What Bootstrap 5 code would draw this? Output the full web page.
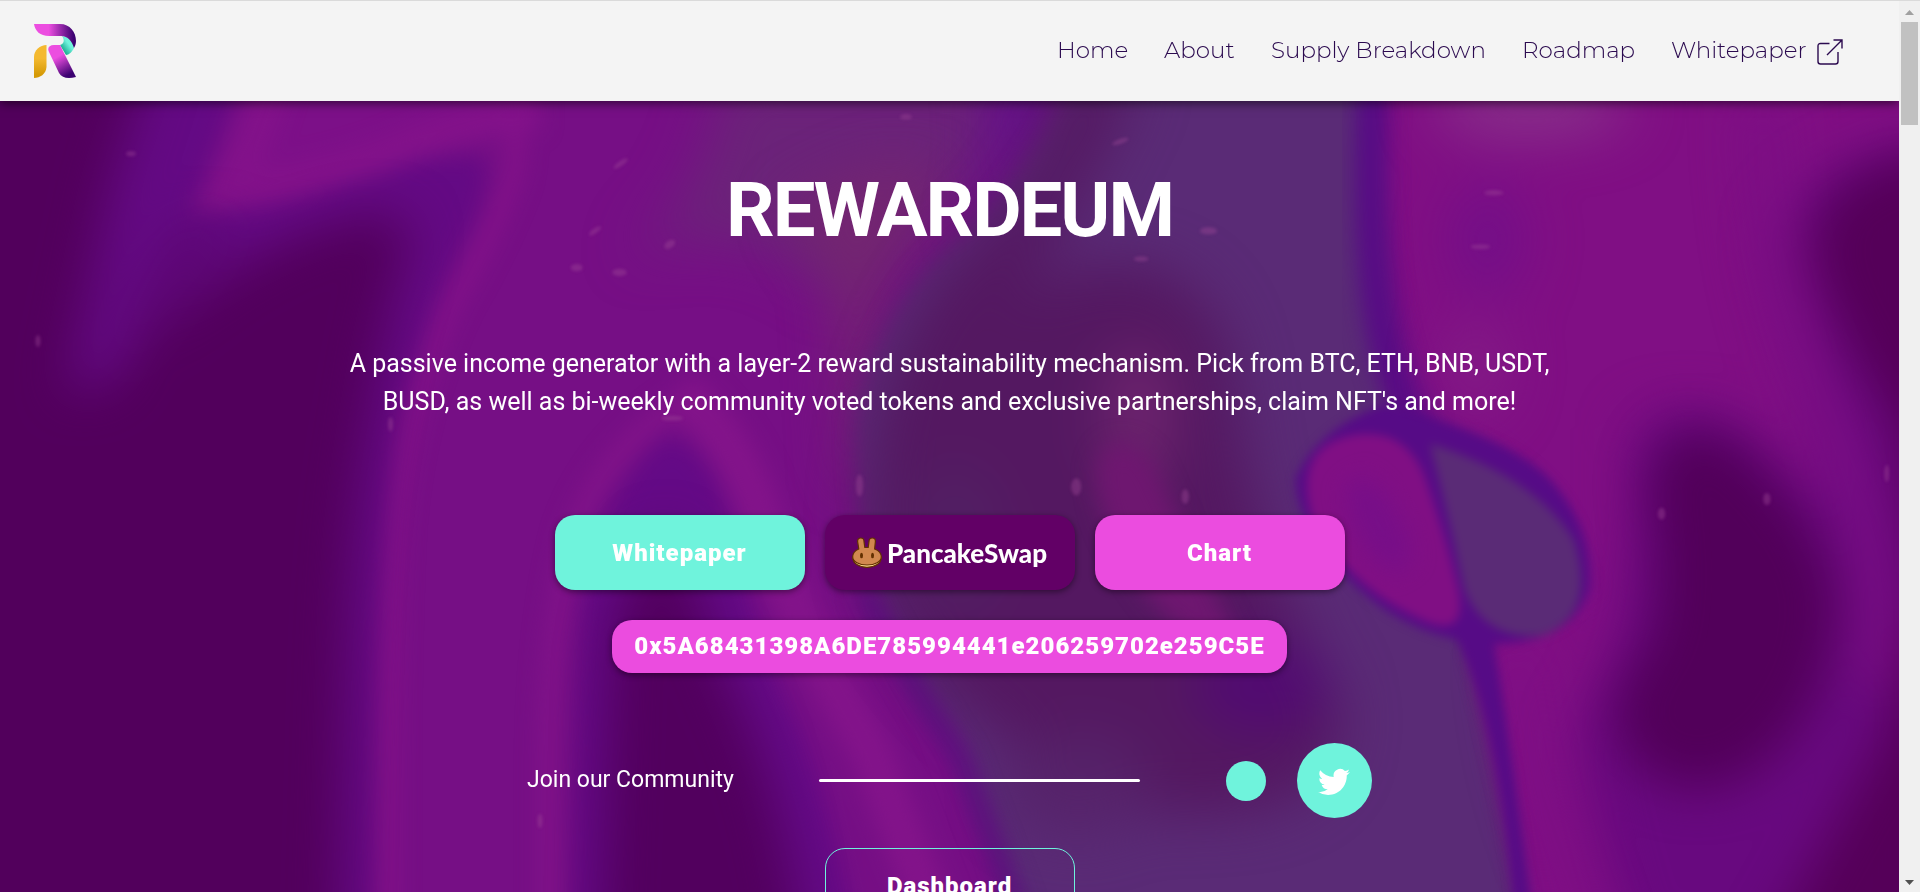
<!DOCTYPE html>
<html lang="en">
<head>
<meta charset="utf-8">
<meta name="viewport" content="width=device-width, initial-scale=1">
<title>Rewardeum</title>
<link href="https://cdn.jsdelivr.net/npm/bootstrap@5.3.0/dist/css/bootstrap.min.css" rel="stylesheet">
<style>
  body { font-family: Roboto, "Liberation Sans", sans-serif; background: #52005c; }
  .site-header { height: 101px; background: #f4f4f4; border-top: 1px solid #dadada; box-shadow: 0 2px 10px rgba(0,0,0,.6); padding: 0 56px 0 34px; z-index: 2; }
  .main-menu { display: grid; grid-template-columns: 69px 69px 213px 111px 172px; column-gap: 38px; padding-bottom: 2px; font-family: Montserrat, Inter, sans-serif; font-size: 23px; font-weight: 300; }
  .main-menu a { color: #2b0a4f; text-decoration: none; white-space: nowrap; }
  .hero { flex: 1 1 0; min-height: 0; overflow: hidden; padding-top: 65px; color: #fff; }
  .backdrop filter { color-interpolation-filters: sRGB; }
  .hero-title { font-size: 76px; line-height: 88px; font-weight: 700; letter-spacing: -2px; margin-bottom: 91px; }
  .hero-text { font-size: 25px; line-height: 38px; max-width: 1240px; margin-bottom: 94px; }
  .pill { width: 250px; height: 75px; border-radius: 20px; color: #fff !important; font-size: 24px; font-weight: 900; letter-spacing: 1px; box-shadow: 0 2px 6px rgba(0,0,0,.45); }
  .pill-row { gap: 20px; margin-bottom: 30px; }
  .teal, .teal:hover { background: #6ff3dc; }
  .pink, .pink:hover { background: #eb4cdf; }
  .plum, .plum:hover { background: #620066; }
  .swap-name { font-family: Lato, sans-serif; font-size: 26px; letter-spacing: 0; padding-top: 2px; }
  .address { width: auto; height: 53px; padding: 0 22px; line-height: 53px; }
  .community { width: 100%; max-width: 845px; height: 75px; margin-top: 70px; margin-bottom: 30px; font-size: 23px; }
  .rule { width: 321px; height: 3px; border-radius: 2px; background: #fff; }
  .dot { width: 40px; height: 40px; }
  .bird { width: 75px; height: 75px; }
  .socials { gap: 31px; }
  .outline-pill { border: 1px solid #6ff3dc; box-shadow: none; }
  .scroll-track { width: 21px; background: #f0f0f0; border-top: 1px solid #dadada; padding: 9px 2px 7px; }
  .scroll-thumb { width: 17px; height: 103px; background: #c1c1c1; margin-top: 7px; }
</style>
</head>
<body class="vh-100 d-flex overflow-hidden">
<div class="flex-grow-1 d-flex flex-column position-relative overflow-hidden">
  <header class="site-header position-relative d-flex align-items-center justify-content-between flex-shrink-0">
    <a href="#" aria-label="Rewardeum home">
      <svg class="d-block" width="42" height="54" viewBox="0 0 42 54">
        <defs>
          <linearGradient id="lg1"><stop offset=".35" stop-color="#ec4ee0"/><stop offset=".95" stop-color="#3b0170"/></linearGradient>
          <linearGradient id="lg2" x1=".3" y1="0" x2=".8" y2="1"><stop offset=".3" stop-color="#ec4ee0"/><stop offset=".9" stop-color="#3b0170"/></linearGradient>
          <linearGradient id="lg3" x1="1" y1="0" x2="0" y2="1"><stop offset=".4" stop-color="#6ff3dc"/><stop offset=".8" stop-color="#14a78c"/></linearGradient>
          <linearGradient id="lg4" x2="0" y2="1"><stop offset=".4" stop-color="#f4b92f"/><stop offset=".9" stop-color="#d59a06"/></linearGradient>
        </defs>
        <path fill="url(#lg3)" d="M28 12C35 13 40 17 40 24C38 28 35 31 32 31L26 21C30 20 31 16 28 12Z"/>
        <path fill="url(#lg1)" d="M0 0H26C36 0 42 8 42 17C42 20 41 22 40 24C38 17 34 12 27 12H15C6 12 1 7 0 0Z"/>
        <path fill="url(#lg4)" d="M12.5 21V43C12 50 6 54 0 54V33C0 26 6 21 12.5 21Z"/>
        <path fill="url(#lg2)" d="M20 21H26L42 53C34 55 28 54 25 49L15 28C13 24 15 21 20 21Z"/>
      </svg>
    </a>
    <nav class="main-menu">
      <a href="#">Home</a>
      <a href="#">About</a>
      <a href="#">Supply Breakdown</a>
      <a href="#">Roadmap</a>
      <a href="#" class="d-flex justify-content-between align-items-center">Whitepaper
        <svg class="mt-1" width="26" height="26" viewBox="0 0 26 26" fill="none" stroke="#2b0a4f" stroke-width="1.4"><path d="M12.500 4.500H3.500Q1 4.500 1 7V22.500Q1 25 3.500 25H18.500Q21 25 21 22.500V13M16.500 1H25V9.500M25 1L10 16"/></svg>
      </a>
    </nav>
  </header>

  <main class="hero position-relative d-flex flex-column align-items-center">
    <svg class="backdrop position-absolute top-0 start-0 w-100 h-100" viewBox="0 82 1551 646" preserveAspectRatio="xMidYMin slice" aria-hidden="true">
      <defs>
        <filter id="b3" x="-20%" y="-20%" width="140%" height="140%"><feGaussianBlur stdDeviation="4"/></filter>
        <filter id="b6" x="-50%" y="-50%" width="200%" height="200%"><feGaussianBlur stdDeviation="9"/></filter>
        <filter id="b12" x="-50%" y="-50%" width="200%" height="200%"><feGaussianBlur stdDeviation="20"/></filter>
        <filter id="b20" x="-60%" y="-60%" width="220%" height="220%"><feGaussianBlur stdDeviation="22"/></filter>
        <filter id="speck"><feGaussianBlur stdDeviation="1.500"/></filter>
      </defs>
      <rect y="60" width="1560" height="690" fill="#760f85"/>

      <!-- left folds -->
      <g filter="url(#b6)">
        <path fill="#640a84" d="M-60 40H205L180 110L155 175Q220 175 280 150Q350 122 395 128Q405 150 375 205Q340 270 322 360Q310 450 306 560L302 780H-60Z"/>
        <path fill="none" stroke="#86128a" stroke-width="12" d="M425 60L420 140Q405 185 370 245Q330 330 322 430Q316 540 318 780"/>
        <path fill="#80118a" d="M215 40L185 110L160 175Q240 165 320 135T440 92V60Z" opacity=".6"/>
        <path fill="none" stroke="#83128a" stroke-width="26" d="M225 60Q210 120 185 155Q270 145 330 120T440 92"/>
      </g>
      <g filter="url(#b12)">
        <path fill="#52005c" d="M-60 40H125L90 150L55 320Q90 320 130 268Q200 200 280 180Q335 165 335 195Q315 250 302 340Q285 430 282 560L275 800H-60Z"/>
        <path fill="#5c0672" d="M150 180L195 185Q140 240 100 310Q90 260 150 180Z"/>
      </g>

      <!-- centre fold -->
      <g filter="url(#b6)">
        <path fill="none" stroke="#83148a" stroke-width="14" d="M560 325Q490 370 467 440Q448 520 448 620V780"/>
        <path fill="none" stroke="#83148a" stroke-width="34" d="M555 320Q595 350 618 410Q655 520 710 610L775 780"/>
        <path fill="#640a86" d="M545 355Q500 390 480 460Q468 540 468 780H700Q690 700 655 600Q620 530 600 440Q585 365 545 355Z"/>
      </g>
      <path filter="url(#b12)" fill="#52005e" d="M545 430Q505 470 498 530L490 780H655Q645 680 615 600Q580 520 570 480Z"/>

      <!-- grey violet body -->
      <path filter="url(#b20)" fill="#6b2379" d="M590 60H870L790 160L690 240Q600 170 510 210Q580 160 590 60Z"/>
      <path filter="url(#b12)" fill="#732571" d="M640 170Q740 110 770 150L720 230L700 400H690L680 230Z"/>
      <path filter="url(#b12)" fill="#65118a" d="M800 60H880Q850 140 790 200Q820 120 800 60Z"/>
      <g filter="url(#b6)">
        <path fill="#5a2b76" d="M880 50H1128Q1118 210 1140 320L1160 370L1200 500Q1225 620 1250 790H840Q820 700 780 600Q700 500 700 340Q720 240 790 190Q860 120 880 50Z"/>
      </g>
      <g filter="url(#b20)">
        <path fill="#541861" d="M870 60H930Q890 150 830 250Q860 210 930 215Q1000 230 1010 320Q1025 460 1090 560Q1110 640 1030 660Q900 680 850 620Q740 560 710 460Q700 300 780 210Q850 150 870 60Z"/>
        <ellipse cx="930" cy="340" rx="30" ry="60" fill="#6d236e"/>
        <ellipse cx="780" cy="440" rx="35" ry="60" fill="#522064"/>
        <ellipse cx="1030" cy="560" rx="55" ry="38" fill="#520a72"/>
        <ellipse cx="880" cy="640" rx="60" ry="40" fill="#56236a"/>
      </g>
      <path filter="url(#b6)" fill="#6e1770" d="M895 380Q910 345 940 375Q965 430 990 480L1015 530Q960 530 920 460Q895 420 895 380Z"/>
      <path filter="url(#b6)" fill="none" stroke="#550d7d" stroke-width="12" d="M705 480Q745 560 785 620L845 780"/>

      <!-- right side -->
      <path filter="url(#b6)" fill="#800f84" d="M1128 50H1600V790H1258Q1240 650 1205 530L1300 480Q1270 390 1190 350Q1130 280 1128 50Z"/>
      <path filter="url(#b6)" fill="none" stroke="#560a86" stroke-width="24" d="M1122 50Q1112 240 1140 310T1165 370"/>
      <g filter="url(#b20)">
        <ellipse cx="1250" cy="88" rx="80" ry="24" fill="#88308a"/>
        <ellipse cx="1215" cy="195" rx="28" ry="45" fill="#720f88"/>
        <ellipse cx="1205" cy="300" rx="24" ry="40" fill="#831c86"/>
        <path fill="#68097f" d="M1335 350Q1400 310 1460 390L1500 420L1480 300L1450 190Q1480 130 1580 120V780H1330Q1280 620 1290 590Q1340 540 1335 350Z"/>
      </g>
      <g filter="url(#b12)">
        <path fill="none" stroke="#7b0e84" stroke-width="30" d="M1440 80Q1440 230 1490 330Q1545 460 1530 560"/>
        <path fill="none" stroke="#7e0f86" stroke-width="18" d="M1240 530Q1240 600 1270 680L1310 790"/>
        <path fill="#52005a" d="M1345 390Q1370 320 1430 370Q1500 440 1500 500Q1490 590 1430 630Q1370 665 1325 610Q1305 570 1350 520Q1360 460 1345 390Z"/>
        <path fill="#550059" d="M1620 120Q1490 120 1478 200Q1490 260 1550 350L1570 480L1540 600L1440 780H1620Z"/>
      </g>

      <!-- twin bubbles -->
      <g filter="url(#b3)">
        <path fill="#560b86" d="M1130 330Q1230 355 1265 390Q1302 430 1298 480Q1285 525 1220 525Q1236 620 1255 780H1240Q1228 600 1190 522Q1130 510 1085 455Q1058 420 1058 390Q1075 350 1130 330Z"/>
        <path fill="#800f84" d="M1105 355Q1148 348 1164 390Q1181 440 1188 470Q1203 522 1165 507Q1110 485 1074 430Q1052 365 1105 355Z"/>
        <path fill="#5a2b76" d="M1168 362Q1252 388 1285 440Q1305 502 1260 519Q1211 522 1196 480Q1183 420 1168 362Z"/>
      </g>
      <ellipse filter="url(#b6)" cx="1126" cy="428" rx="18" ry="42" transform="rotate(-28 1126 428)" fill="#770e88"/>

      <!-- drifting specks -->
      <g fill="#a04a98" opacity=".4" filter="url(#speck)">
        <ellipse cx="107" cy="125" rx="4" ry="2"/><ellipse cx="31" cy="278" rx="2" ry="5"/>
        <ellipse cx="507" cy="133" rx="7" ry="2" transform="rotate(-35 507 133)"/>
        <ellipse cx="486" cy="188" rx="6" ry="2" transform="rotate(-35 486 188)"/>
        <ellipse cx="471" cy="218" rx="5" ry="3"/><ellipse cx="506" cy="222" rx="6" ry="3"/>
        <ellipse cx="547" cy="199" rx="5" ry="3" transform="rotate(-35 547 199)"/>
        <ellipse cx="319" cy="346" rx="2" ry="6"/><ellipse cx="549" cy="341" rx="9" ry="2"/>
        <ellipse cx="702" cy="396" rx="3" ry="9"/><ellipse cx="441" cy="670" rx="2" ry="6"/>
        <ellipse cx="740" cy="95" rx="5" ry="2"/><ellipse cx="915" cy="115" rx="7" ry="2" transform="rotate(-20 915 115)"/>
        <ellipse cx="987" cy="188" rx="7" ry="3"/><ellipse cx="932" cy="211" rx="6" ry="2"/>
        <ellipse cx="1220" cy="157" rx="8" ry="2"/><ellipse cx="1209" cy="201" rx="8" ry="2"/>
        <ellipse cx="879" cy="397" rx="4" ry="7"/><ellipse cx="968" cy="405" rx="3" ry="6"/>
        <ellipse cx="1443" cy="407" rx="3" ry="5"/><ellipse cx="1357" cy="419" rx="3" ry="5"/>
        <ellipse cx="1541" cy="386" rx="2" ry="7"/>
      </g>
    </svg>

    <h1 class="hero-title position-relative text-center">REWARDEUM</h1>
    <p class="hero-text position-relative text-center">A passive income generator with a layer-2 reward sustainability mechanism. Pick from BTC, ETH, BNB, USDT, BUSD, as well as bi-weekly community voted tokens and exclusive partnerships, claim NFT's and more!</p>

    <div class="pill-row position-relative d-flex justify-content-center">
      <button type="button" class="pill teal btn border-0">Whitepaper</button>
      <button type="button" class="pill plum btn border-0 d-flex align-items-center justify-content-center gap-1 px-0">
        <svg width="31" height="31" viewBox="0 0 31 31" stroke="#633001" stroke-width="1.200">
          <path fill="#fedc90" d="M.7 20C.7 26.500 7 30.300 15 30.300S29.300 26.500 29.300 20Z"/>
          <path fill="#d1884f" d="M6.800 12L5.600 4.500Q5.500 1 8.800 1T12 4.500L12.800 10.500H16.200L17 4.500Q17 1 20.300 1T23.400 4.500L22.600 12Q29.300 14.500 29.300 20C29.300 24.500 23 28 15 28S.7 24.500 .7 20Q.7 14.500 6.800 12Z"/>
          <g fill="#633001" stroke="none"><ellipse cx="9.500" cy="18.500" rx="1.500" ry="2.700"/><ellipse cx="20.500" cy="18.500" rx="1.500" ry="2.700"/></g>
        </svg>
        <span class="swap-name">PancakeSwap</span>
      </button>
      <button type="button" class="pill pink btn border-0">Chart</button>
    </div>
    <button type="button" class="pill address pink btn border-0 position-relative">0x5A68431398A6DE785994441e206259702e259C5E</button>

    <div class="community position-relative d-flex align-items-center justify-content-between flex-shrink-0">
      <span>Join our Community</span>
      <span class="rule"></span>
      <div class="socials d-flex align-items-center">
        <a href="#" class="dot teal rounded-circle" aria-label="Community"></a>
        <a href="#" class="bird teal rounded-circle d-flex align-items-center justify-content-center" aria-label="Twitter">
          <svg width="32" height="32" viewBox="0 0 16 16" fill="#fff"><path d="M5.026 15c6.038 0 9.341-5.003 9.341-9.334 0-.14 0-.282-.006-.422A6.685 6.685 0 0 0 16 3.542a6.658 6.658 0 0 1-1.889.518 3.301 3.301 0 0 0 1.447-1.817 6.533 6.533 0 0 1-2.087.793A3.286 3.286 0 0 0 7.875 6.03a9.325 9.325 0 0 1-6.767-3.429 3.289 3.289 0 0 0 1.018 4.382A3.323 3.323 0 0 1 .64 6.575v.045a3.288 3.288 0 0 0 2.632 3.218 3.203 3.203 0 0 1-.865.115 3.230 3.230 0 0 1-.614-.057 3.283 3.283 0 0 0 3.067 2.277A6.588 6.588 0 0 1 .78 13.580a6.320 6.320 0 0 1-.78-.045A9.344 9.344 0 0 0 5.026 15z"/></svg>
        </a>
      </div>
    </div>
    <button type="button" class="pill outline-pill btn position-relative flex-shrink-0">Dashboard</button>
  </main>
</div>
<div class="scroll-track d-flex flex-column align-items-center flex-shrink-0" aria-hidden="true">
  <svg width="9" height="5" viewBox="0 0 9 5"><path fill="#a0a0a0" d="M0 5L4.500 0L9 5Z"/></svg>
  <div class="scroll-thumb"></div>
  <svg class="mt-auto" width="9" height="5" viewBox="0 0 9 5"><path fill="#505050" d="M0 0L4.500 5L9 0Z"/></svg>
</div>
<script src="https://cdn.jsdelivr.net/npm/bootstrap@5.3.0/dist/js/bootstrap.bundle.min.js"></script>
</body>
</html>
